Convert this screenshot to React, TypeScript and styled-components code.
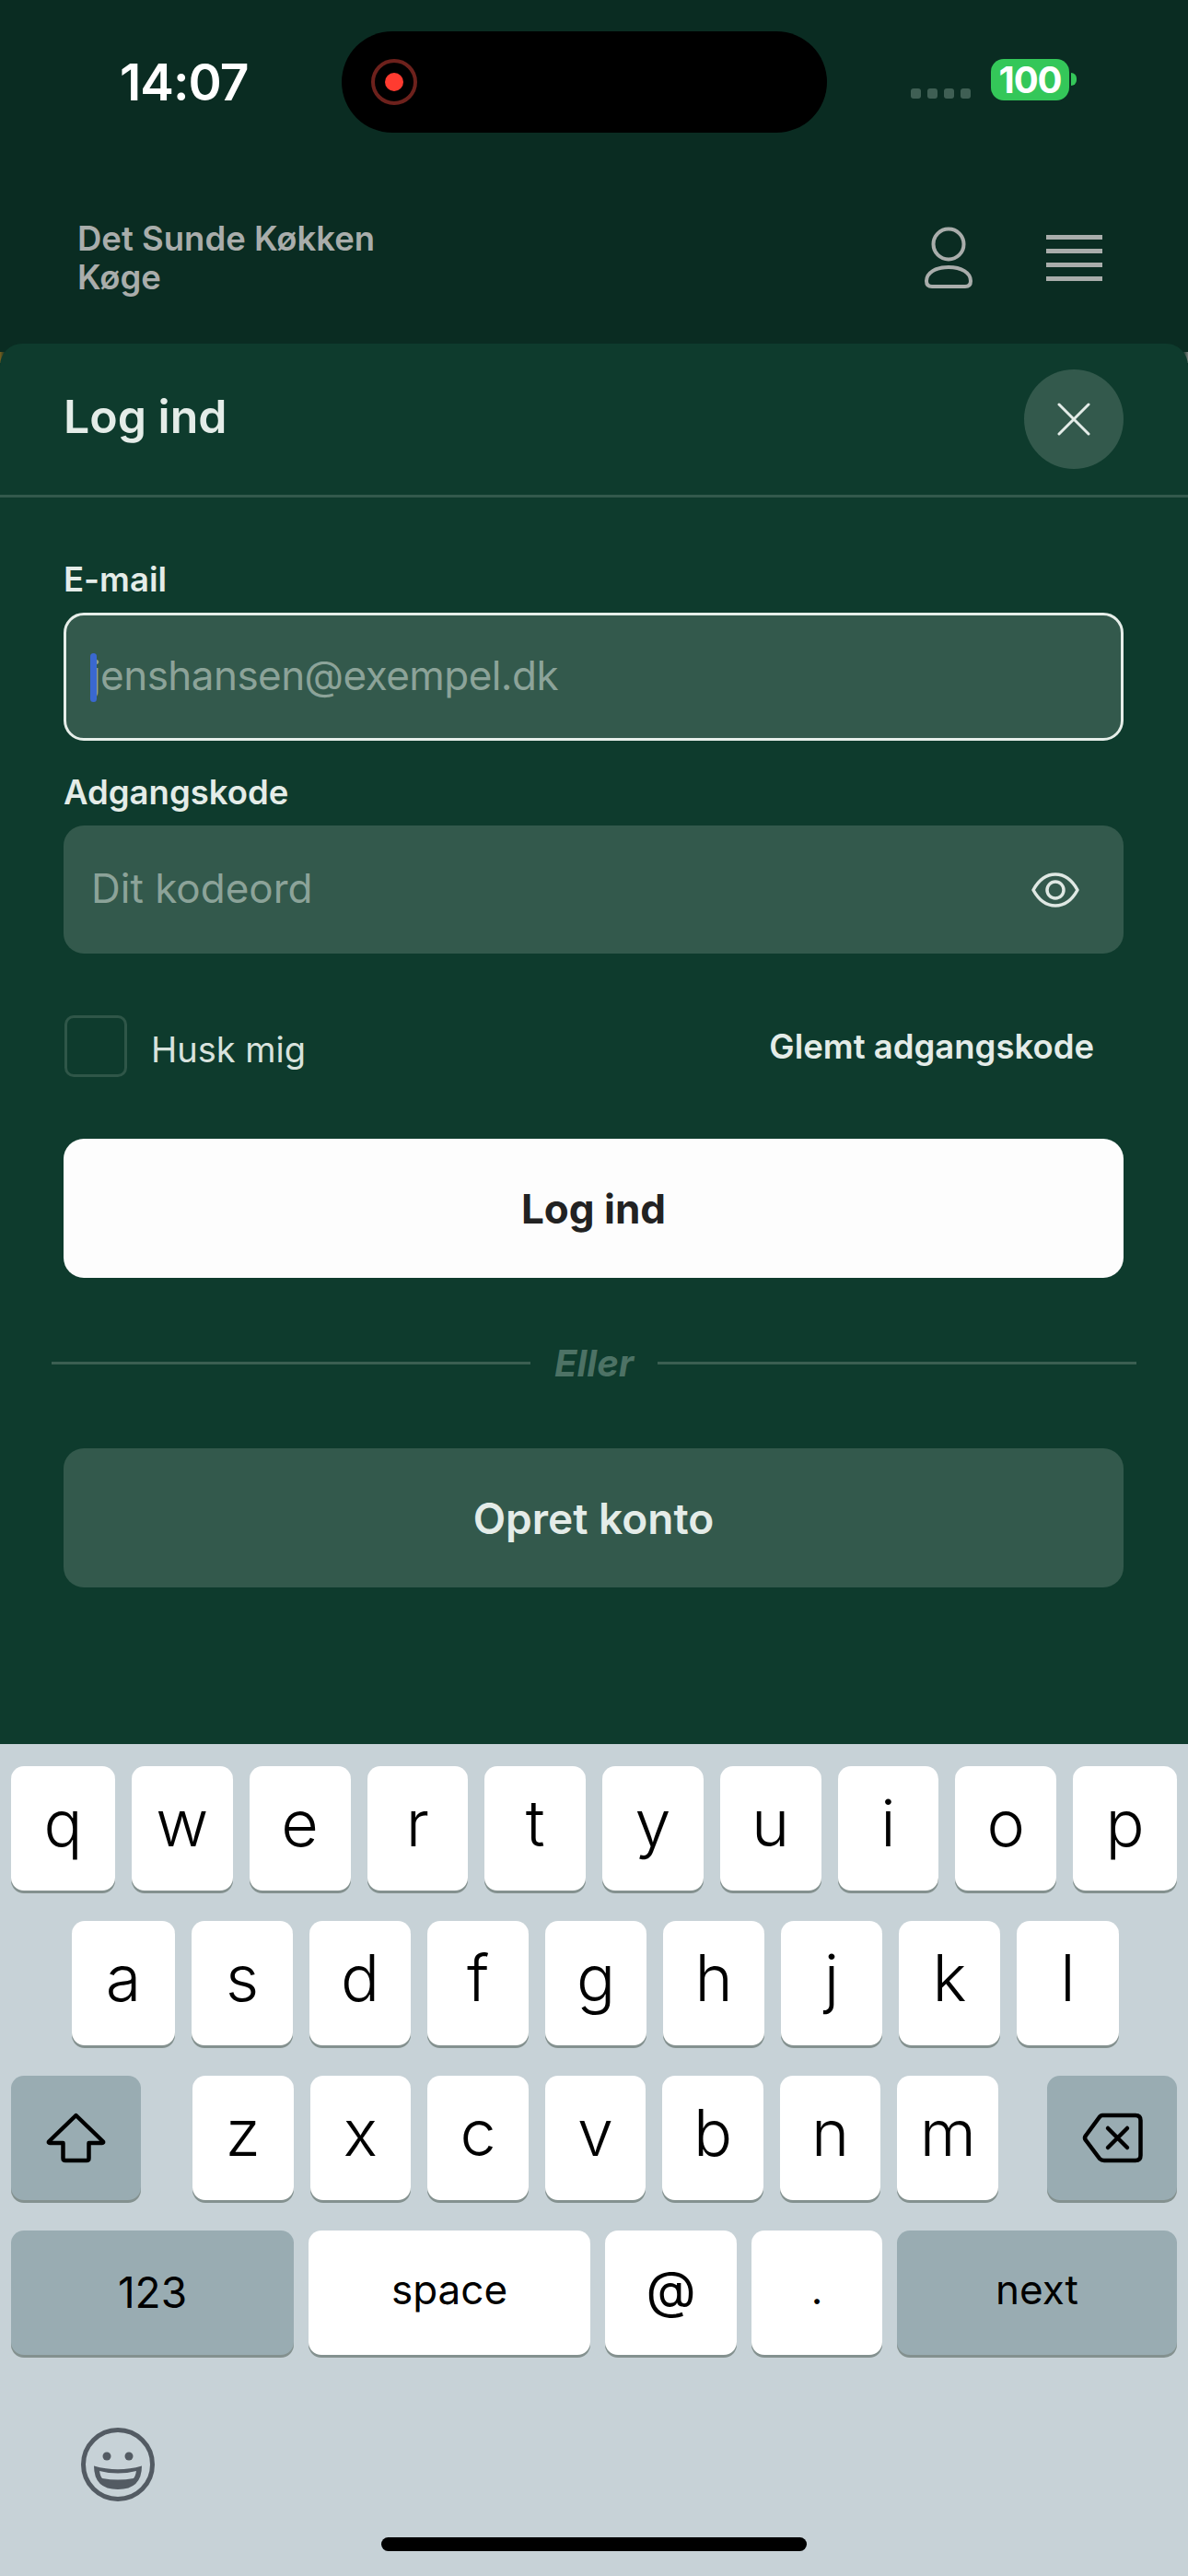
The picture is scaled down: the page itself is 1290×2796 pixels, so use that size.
import React from 'react';
import styled, {createGlobalStyle} from 'styled-components';

const GlobalStyle = createGlobalStyle`
  html, body {
    margin: 0;
    padding: 0;
    background: #0a2c22;
  }
  * {
    box-sizing: border-box;
  }
  body {
    font-family: Inter, "Liberation Sans", sans-serif;
  }
`;

const Screen = styled.div`
  position: relative;
  z-index: 0;
  width: 1290px;
  height: 2796px;
  display: flex;
  flex-direction: column;
  background: #0a2c22;
  overflow: hidden;
`;

const StatusBar = styled.div`
  display: flex;
  align-items: flex-start;
  padding: 34px 0 0 130px;
  height: 144px;
`;

const Time = styled.div`
  width: 241px;
  height: 110px;
  display: flex;
  align-items: center;
  color: #fff;
  font-size: 55px;
  font-weight: 600;
  letter-spacing: -1px;
`;

const Island = styled.div`
  width: 527px;
  height: 110px;
  border-radius: 55px;
  background: #000;
  display: flex;
  align-items: center;
  padding-left: 32px;
`;

const RecordRing = styled.div`
  width: 50px;
  height: 50px;
  border-radius: 50%;
  border: 4px solid #6d211c;
  display: flex;
  align-items: center;
  justify-content: center;
  &::after {
    content: '';
    width: 20px;
    height: 20px;
    border-radius: 50%;
    background: #ff3b30;
  }
`;

const StatusRight = styled.div`
  display: flex;
  align-items: flex-end;
  margin: 30px 0 0 91px;
`;

const SignalDots = styled.div`
  display: flex;
  gap: 7px;
  margin: 0 22px 2px 0;
`;

const SignalDot = styled.span`
  width: 11px;
  height: 11px;
  border-radius: 3px;
  background: #3f5f54;
`;

const Battery = styled.div`
  position: relative;
  width: 85px;
  height: 45px;
  border-radius: 14px;
  background: #34c759;
  color: #fff;
  font-size: 40px;
  font-weight: 700;
  display: flex;
  align-items: center;
  justify-content: center;
  letter-spacing: -1px;
  &::after {
    content: '';
    position: absolute;
    top: 15px;
    right: -8px;
    width: 6px;
    height: 14px;
    border-radius: 0 7px 7px 0;
    background: #34c759;
  }
`;

const NavBar = styled.div`
  display: flex;
  align-items: center;
  justify-content: space-between;
  padding: 94px 93px 51px 84px;
`;

const Brand = styled.div`
  color: #a9adab;
  font-size: 36.5px;
  font-weight: 600;
  line-height: 42px;
`;

const NavIcons = styled.div`
  display: flex;
  align-items: center;
  gap: 78px;
`;

const Sheet = styled.div`
  position: relative;
  flex: 1;
  display: flex;
  flex-direction: column;
  background: #0e3b2d;
  border-radius: 24px 24px 0 0;
  &::before {
    content: '';
    position: absolute;
    z-index: -1;
    top: 9px;
    left: 0;
    right: 0;
    height: 12px;
    background: linear-gradient(90deg, #77601f 0, #0a2c22 6px, #0a2c22 calc(100% - 6px), #6f7a74 100%);
  }
`;

const SheetHeader = styled.div`
  display: flex;
  align-items: center;
  justify-content: space-between;
  padding: 28px 70px 28px 69px;
  height: 167px;
  border-bottom: 3px solid #33594c;
`;

const SheetTitle = styled.h1`
  margin: 0 0 6px 0;
  color: #e4ece8;
  font-size: 50px;
  font-weight: 600;
`;

const CloseButton = styled.div`
  width: 108px;
  height: 108px;
  border-radius: 50%;
  background: #33594c;
  display: flex;
  align-items: center;
  justify-content: center;
`;

const Form = styled.div`
  display: flex;
  flex-direction: column;
  padding: 69px 70px 0 69px;
`;

const FieldLabel = styled.label`
  color: #e4ece8;
  font-size: 36.5px;
  font-weight: 600;
  line-height: 40px;
  margin-bottom: 16px;
`;

const Field = styled.div<{$focused?: boolean}>`
  position: relative;
  height: 139px;
  display: flex;
  align-items: center;
  justify-content: space-between;
  padding: 0 48px 0 ${p => (p.$focused ? '27px' : '30px')};
  margin-bottom: 36px;
  background: #33594c;
  border-radius: 22px;
  border: ${p => (p.$focused ? '3px solid #e6eee9' : 'none')};
`;

const Placeholder = styled.span`
  color: #8ca399;
  font-size: 44px;
  padding-bottom: 3px;
`;

const EmailPlaceholder = styled(Placeholder)`
  letter-spacing: -0.55px;
`;

const Caret = styled.span`
  position: absolute;
  left: 26px;
  top: 41px;
  width: 7px;
  height: 53px;
  border-radius: 4px;
  background: #3a68d0;
`;

const RememberRow = styled.div`
  display: flex;
  align-items: center;
  justify-content: space-between;
  margin-top: 31px;
  height: 67px;
  padding-right: 32px;
`;

const RememberLeft = styled.div`
  display: flex;
  align-items: center;
  gap: 26px;
`;

const Checkbox = styled.div`
  width: 68px;
  height: 67px;
  margin-left: 1px;
  border: 3px solid #2f5648;
  border-radius: 10px;
`;

const RememberText = styled.span`
  color: #d8e2dd;
  font-size: 38px;
  padding-top: 7px;
`;

const ForgotLink = styled.span`
  color: #e4ece8;
  font-size: 36.5px;
  font-weight: 600;
  padding-top: 1px;
`;

const ActionButton = styled.div<{$primary?: boolean}>`
  height: 151px;
  display: flex;
  align-items: center;
  justify-content: center;
  border-radius: 22px;
  font-size: ${p => (p.$primary ? 44 : 46)}px;
  font-weight: ${p => (p.$primary ? 700 : 600)};
  color: ${p => (p.$primary ? '#222' : '#e4ece8')};
  background: ${p => (p.$primary ? '#fdfdfd' : '#33594c')};
`;

const LoginButton = styled(ActionButton)`
  margin-top: 67px;
`;

const Divider = styled.div`
  display: flex;
  align-items: center;
  gap: 26px;
  height: 40px;
  margin: 72px -14px 73px -13px;
  color: #4d7265;
  font-size: 40px;
  font-weight: 700;
  font-style: italic;
  &::before, &::after {
    content: '';
    flex: 1;
    height: 3px;
    background: #3b5f52;
  }
`;

const Keyboard = styled.div`
  height: 903px;
  flex: none;
  display: flex;
  flex-direction: column;
  background: #c7d2d7;
  padding: 24px 12px 0;
`;

const KeyRow = styled.div<{$left?: number; $right?: number; $gap?: number}>`
  display: flex;
  gap: ${p => p.$gap ?? 18}px;
  padding: 0 ${p => p.$right ?? 0}px 0 ${p => p.$left ?? 0}px;
  margin-bottom: 33px;
`;

const Key = styled.div<{$fn?: boolean; $w?: number; $size?: number; $lift?: number}>`
  flex: ${p => (p.$w ? `0 0 ${p.$w}px` : '1')};
  height: 135px;
  display: flex;
  align-items: center;
  justify-content: center;
  color: #000;
  background: ${p => (p.$fn ? '#99acb2' : '#fff')};
  border-radius: 14px;
  box-shadow: 0 3px 0 #84918f;
  font-size: ${p => p.$size ?? 70}px;
  font-weight: ${p => (p.$size ? 400 : 350)};
  line-height: 1;
  padding-bottom: ${p => p.$lift ?? 11}px;
`;

const LetterGroup = styled.div`
  flex: 1;
  display: flex;
  gap: 18px;
  margin: 0 35px 0 38px;
`;

const KeyboardFooter = styled.div`
  display: flex;
  flex-direction: column;
`;

const EmojiButton = styled.div`
  margin: 46px 0 0 76px;
  height: 80px;
`;

const HomeIndicator = styled.div`
  width: 462px;
  height: 15px;
  margin: 39px auto 0;
  border-radius: 8px;
  background: #000;
`;

const UserIcon = () => (
  <svg width="56" height="68" viewBox="0 0 56 68" fill="none" stroke="#a9adab" strokeWidth="4">
    <circle cx="28" cy="19" r="16.5" />
    <path d="M28 44c-14 0-24 6-24 15 0 4 2 6 6 6h36c4 0 6-2 6-6 0-9-10-15-24-15z" />
  </svg>
);

const MenuIcon = () => (
  <svg width="61" height="51" viewBox="0 0 61 51" fill="#a9adab">
    <rect y="0" width="61" height="5" />
    <rect y="15" width="61" height="5" />
    <rect y="30" width="61" height="5" />
    <rect y="45" width="61" height="5" />
  </svg>
);

const CloseIcon = () => (
  <svg width="36" height="36" viewBox="0 0 36 36" stroke="#e4ece8" strokeWidth="3" strokeLinecap="round">
    <path d="M2 2l32 32M34 2L2 34" />
  </svg>
);

const EyeIcon = () => (
  <svg width="52" height="38" viewBox="0 0 52 38" fill="none" stroke="#dfe8e3" strokeWidth="3.5">
    <path d="M2 19C8 8 16 2 26 2s18 6 24 17c-6 11-14 17-24 17S8 30 2 19z" strokeLinejoin="round" />
    <circle cx="26" cy="19" r="9" />
  </svg>
);

const ShiftIcon = () => (
  <svg width="65" height="55" viewBox="0 0 65 55" fill="none" stroke="#000" strokeWidth="4.5" strokeLinejoin="round">
    <path d="M32.500 3L62 31.500Q62.500 33 61 33H46.500V49.500Q46.500 52 44 52H21Q18.500 52 18.500 49.500V33H4Q2.500 33 3 31.500Z" />
  </svg>
);

const DeleteIcon = () => (
  <svg width="66" height="55" viewBox="0 0 66 55" fill="none" stroke="#000" strokeWidth="4.500" strokeLinejoin="round" strokeLinecap="round">
    <path d="M22 3H58Q63.500 3 63.500 8.500V46.500Q63.500 52 58 52H24Q21 52 19 50L4 30Q2 27.500 4 25L18 6Q20 3 22 3Z" />
    <path d="M28 17l21 21M49 17L28 38" />
  </svg>
);

const EmojiIcon = () => (
  <svg width="80" height="80" viewBox="0 0 80 80">
    <circle cx="40" cy="40" r="37.500" fill="none" stroke="#535b63" strokeWidth="5" />
    <circle cx="28" cy="31" r="4.500" fill="#535b63" />
    <circle cx="52" cy="31" r="4.500" fill="#535b63" />
    <path d="M14 41.500Q40 49 66 41.500Q66 67 40 67Q14 67 14 41.500Z" fill="#535b63" />
    <path d="M20 47Q40 52 60 47Q59 53 57 55Q40 58 23 55Q21 53 20 47Z" fill="#c7d2d7" />
  </svg>
);

const topRow = ['w', 'e', 'r', 't', 'y', 'u', 'i', 'o'];
const middleRow = ['s', 'd', 'f', 'g', 'h', 'j', 'k'];
const bottomRow = ['z', 'x', 'c', 'v', 'b', 'n', 'm'];

function App() {
  return (
    <Screen>
      <GlobalStyle />
      <StatusBar>
        <Time>14:07</Time>
        <Island>
          <RecordRing />
        </Island>
        <StatusRight>
          <SignalDots>
            <SignalDot />
            <SignalDot />
            <SignalDot />
            <SignalDot />
          </SignalDots>
          <Battery>100</Battery>
        </StatusRight>
      </StatusBar>
      <NavBar>
        <Brand>
          Det Sunde Køkken
          <br />
          Køge
        </Brand>
        <NavIcons>
          <UserIcon />
          <MenuIcon />
        </NavIcons>
      </NavBar>
      <Sheet>
        <SheetHeader>
          <SheetTitle>Log ind</SheetTitle>
          <CloseButton>
            <CloseIcon />
          </CloseButton>
        </SheetHeader>
        <Form>
          <FieldLabel>E-mail</FieldLabel>
          <Field $focused>
            <Caret />
            <EmailPlaceholder>jenshansen@exempel.dk</EmailPlaceholder>
          </Field>
          <FieldLabel>Adgangskode</FieldLabel>
          <Field>
            <Placeholder>Dit kodeord</Placeholder>
            <EyeIcon />
          </Field>
          <RememberRow>
            <RememberLeft>
              <Checkbox />
              <RememberText>Husk mig</RememberText>
            </RememberLeft>
            <ForgotLink>Glemt adgangskode</ForgotLink>
          </RememberRow>
          <LoginButton $primary>Log ind</LoginButton>
          <Divider>Eller</Divider>
          <ActionButton>Opret konto</ActionButton>
        </Form>
      </Sheet>
      <Keyboard>
        <KeyRow>
          <Key $w={113}>q</Key>
          {topRow.map(k => <Key key={k}>{k}</Key>)}
          <Key $w={113}>p</Key>
        </KeyRow>
        <KeyRow $left={66} $right={63}>
          <Key $w={112}>a</Key>
          {middleRow.map(k => <Key key={k}>{k}</Key>)}
          <Key $w={111}>l</Key>
        </KeyRow>
        <KeyRow>
          <Key $fn $w={141} $lift={0}>
            <ShiftIcon />
          </Key>
          <LetterGroup>
            {bottomRow.map(k => <Key key={k}>{k}</Key>)}
          </LetterGroup>
          <Key $fn $w={141} $lift={0}>
            <DeleteIcon />
          </Key>
        </KeyRow>
        <KeyRow $gap={16}>
          <Key $fn $w={307} $size={46} $lift={2}>123</Key>
          <Key $w={306} $size={44} $lift={8}>space</Key>
          <Key $w={143} $size={56} $lift={8}>@</Key>
          <Key $w={142} $size={44} $lift={8}>.</Key>
          <Key $fn $size={44} $lift={8}>next</Key>
        </KeyRow>
        <KeyboardFooter>
          <EmojiButton>
            <EmojiIcon />
          </EmojiButton>
          <HomeIndicator />
        </KeyboardFooter>
      </Keyboard>
    </Screen>
  );
}

export default App;
